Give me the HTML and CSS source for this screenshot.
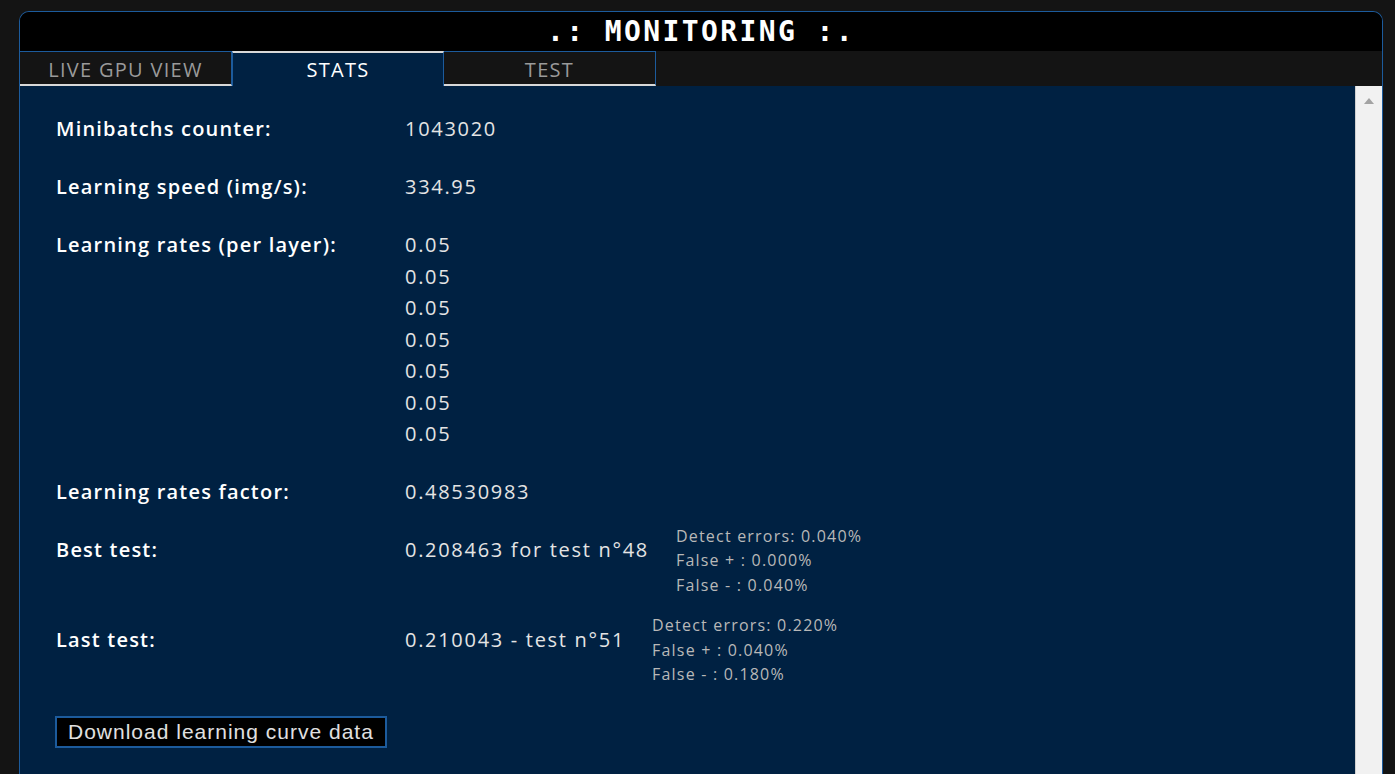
FILE: index.html
```html
<!DOCTYPE html>
<html>
<head>
<meta charset="utf-8">
<link rel="stylesheet" href="styles.css">
</head>
<body>
<div class="panel">
  <div class="title">.: MONITORING :.</div>
  <div class="tabs">
    <div class="tab">LIVE GPU VIEW</div>
    <div class="tab active">STATS</div>
    <div class="tab">TEST</div>
  </div>
  <div class="body">
    <div class="content">
      <div class="row">
        <div class="label">Minibatchs counter:</div>
        <div class="value">1043020</div>
      </div>
      <div class="row">
        <div class="label">Learning speed (img/s):</div>
        <div class="value">334.95</div>
      </div>
      <div class="row">
        <div class="label">Learning rates (per layer):</div>
        <div class="value">0.05<br>0.05<br>0.05<br>0.05<br>0.05<br>0.05<br>0.05</div>
      </div>
      <div class="row">
        <div class="label">Learning rates factor:</div>
        <div class="value">0.48530983</div>
      </div>
      <div class="row">
        <div class="label">Best test:</div>
        <div class="value">0.208463 for test n°48</div>
        <div class="details">Detect errors: 0.040%<br>False + : 0.000%<br>False - : 0.040%</div>
      </div>
      <div class="row">
        <div class="label">Last test:</div>
        <div class="value">0.210043 - test n°51</div>
        <div class="details">Detect errors: 0.220%<br>False + : 0.040%<br>False - : 0.180%</div>
      </div>
      <button class="download">Download learning curve data</button>
    </div>
    <div class="scrollbar"><div class="arrow"></div></div>
  </div>
</div>
</body>
</html>
```
FILE: styles.css
```css
html, body {
  margin: 0;
  padding: 0;
  height: 100%;
  overflow: hidden;
  background: #141414;
}
body {
  padding: 11px 12px 0 19px;
  box-sizing: border-box;
  font-family: "Open Sans", "Noto Sans", sans-serif;
}
.panel {
  border: 1px solid #1c5b9c;
  border-bottom: none;
  border-radius: 10px 10px 0 0;
  overflow: hidden;
  height: 900px;
  display: flex;
  flex-direction: column;
}
.title {
  background: #000;
  color: #fff;
  font-family: "DejaVu Sans Mono", monospace;
  font-weight: bold;
  font-size: 28px;
  letter-spacing: 2.4px;
  text-align: center;
  height: 39px;
  line-height: 40px;
}
.tabs {
  display: flex;
  height: 35px;
  background: #141414;
}
.tab {
  width: 212px;
  box-sizing: border-box;
  border: 1px solid #1c5b9c;
  border-bottom: 2px solid #d8d8d8;
  border-left: none;
  color: #9a9a9a;
  font-size: 20px;
  letter-spacing: 1.3px;
  line-height: 35px;
  text-align: center;
}
.tab.active {
  background: #002142;
  color: #fff;
  border-top: 2px solid #d8d8d8;
  border-bottom: none;
  border-left: 1px solid #1c5b9c;
  line-height: 34px;
}
.tab.active + .tab {
  border-left: none;
}
.body {
  flex: 1;
  display: flex;
  background: #002142;
}
.content {
  flex: 1;
  padding: 27px 0 0 36px;
}
.row {
  display: flex;
  align-items: flex-start;
  margin-bottom: 26.5px;
  color: #fff;
}
.label {
  width: 349px;
  font-weight: 600;
  font-size: 20px;
  letter-spacing: 1.2px;
  line-height: 31.5px;
}
.value {
  font-size: 20px;
  line-height: 31.5px;
  color: #e4e4e4;
  letter-spacing: 1.7px;
}
.details {
  margin-left: 27px;
  margin-top: -10.5px;
  font-size: 16px;
  letter-spacing: 1.2px;
  line-height: 24.5px;
  color: #b8b8b8;
}
.download {
  display: block;
  margin: 29px 0 0 -1px;
  padding: 0 11px;
  height: 32px;
  background: #000;
  border: 2px solid #1c5b9c;
  color: #e0e0e0;
  font-family: "Liberation Sans", Arial, sans-serif;
  font-size: 21px;
  letter-spacing: 1px;
  line-height: 28px;
}
.scrollbar {
  width: 26px;
  background: #f1f1f1;
  border-left: 1px solid #d0d0d0;
  display: flex;
  justify-content: center;
}
.arrow {
  margin-top: 12px;
  width: 0;
  height: 0;
  border-left: 5px solid transparent;
  border-right: 5px solid transparent;
  border-bottom: 6px solid #a3a3a3;
}
```
